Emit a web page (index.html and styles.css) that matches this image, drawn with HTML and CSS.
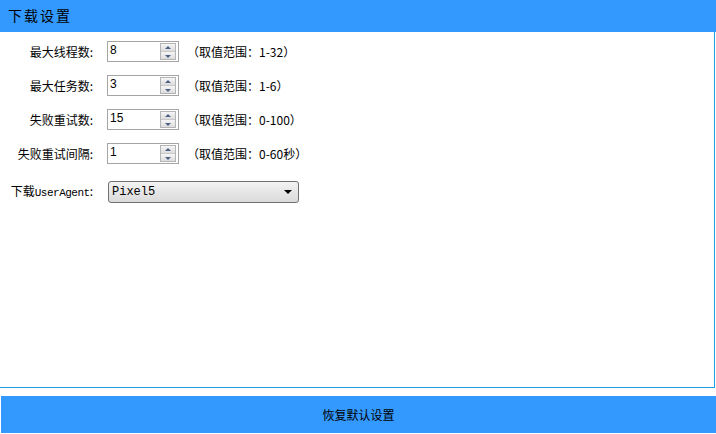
FILE: index.html
```html
<!DOCTYPE html>
<html lang="zh-CN">
<head>
    <meta charset="UTF-8">
    <title>下载设置</title>
    <link rel="stylesheet" href="styles.css">
</head>
<body>
    <div class="header">下载设置</div>

    <div class="panel">
        <div class="form">
            <label class="label">最大线程数:</label>
            <div class="spin">
                <span class="spin-value">8</span>
                <div class="spin-btns"><span class="up"></span><span class="down"></span></div>
            </div>
            <span class="hint">（取值范围：1-32）</span>

            <label class="label">最大任务数:</label>
            <div class="spin">
                <span class="spin-value">3</span>
                <div class="spin-btns"><span class="up"></span><span class="down"></span></div>
            </div>
            <span class="hint">（取值范围：1-6）</span>

            <label class="label">失败重试数:</label>
            <div class="spin">
                <span class="spin-value">15</span>
                <div class="spin-btns"><span class="up"></span><span class="down"></span></div>
            </div>
            <span class="hint">（取值范围：0-100）</span>

            <label class="label">失败重试间隔:</label>
            <div class="spin">
                <span class="spin-value">1</span>
                <div class="spin-btns"><span class="up"></span><span class="down"></span></div>
            </div>
            <span class="hint">（取值范围：0-60秒）</span>

            <label class="label ua-label">下载<span class="mono-sm">UserAgent</span>:</label>
            <div class="combo">
                <span class="mono">Pixel5</span>
                <span class="combo-arrow"></span>
            </div>
        </div>
    </div>

    <div class="footer">恢复默认设置</div>
</body>
</html>
```

FILE: styles.css
```css
body {
    margin: 0;
    width: 716px;
    height: 434px;
    overflow: hidden;
    background: #fff;
    font-family: "Noto Sans CJK SC", "Liberation Sans", sans-serif;
    font-size: 12px;
    color: #000;
}
.header {
    height: 32px;
    line-height: 31px;
    padding-left: 8px;
    background: #3399ff;
    font-size: 14px;
    letter-spacing: 2px;
}
.panel {
    height: 355px;
    width: 714px;
    border-right: 1px solid #1ba1e2;
    border-bottom: 1px solid #1ba1e2;
}
.form {
    display: grid;
    grid-template-columns: 93px 72px auto;
    column-gap: 14px;
    row-gap: 13px;
    align-items: center;
    padding-top: 9px;
}
.label {
    text-align: right;
    white-space: nowrap;
    line-height: 21px;
}
.ua-label {
    margin-top: 3px;
}
.mono {
    font-family: "Liberation Mono", monospace;
    font-size: 12px;
}
.mono-sm {
    font-family: "Liberation Mono", monospace;
    font-size: 11px;
    letter-spacing: -0.5px;
}
.spin {
    display: flex;
    height: 21px;
    box-sizing: border-box;
    border: 1px solid #a5a5a5;
    background: #fff;
    padding: 1px;
}
.spin-value {
    flex: 1;
    font-family: "Liberation Sans", sans-serif;
    font-size: 12px;
    line-height: 15px;
    padding-left: 1px;
}
.spin-btns {
    display: flex;
    flex-direction: column;
    width: 14px;
    border: 1px solid #b4b4b4;
    margin-right: 1px;
}
.spin-btns span {
    flex: 1;
    position: relative;
    background: linear-gradient(#f6f6f6, #dcdcdc);
}
.spin-btns .up {
    border-bottom: 1px solid #c8c8c8;
}
.spin-btns span::after {
    content: "";
    position: absolute;
    left: 4px;
    top: 2px;
    border-left: 3px solid transparent;
    border-right: 3px solid transparent;
}
.spin-btns .up::after {
    border-bottom: 3px solid #4d6185;
}
.spin-btns .down::after {
    border-top: 3px solid #4d6185;
    top: 3px;
}
.hint {
    margin-left: -6px;
    white-space: nowrap;
}
.combo {
    grid-column: 2 / 4;
    width: 191px;
    height: 22px;
    margin-top: 3px;
    margin-left: 1px;
    box-sizing: border-box;
    border: 1px solid #707070;
    border-radius: 3px;
    background: linear-gradient(#f3f3f3, #e6e6e6 50%, #dadada);
    display: flex;
    align-items: center;
    justify-content: space-between;
    padding: 0 6px 0 3px;
}
.combo-arrow {
    border-left: 4px solid transparent;
    border-right: 4px solid transparent;
    border-top: 4px solid #000;
}
.footer {
    height: 37px;
    margin: 8px 0 0 1px;
    width: 715px;
    background: #3399ff;
    text-align: center;
    line-height: 37px;
    font-size: 12px;
}
```
